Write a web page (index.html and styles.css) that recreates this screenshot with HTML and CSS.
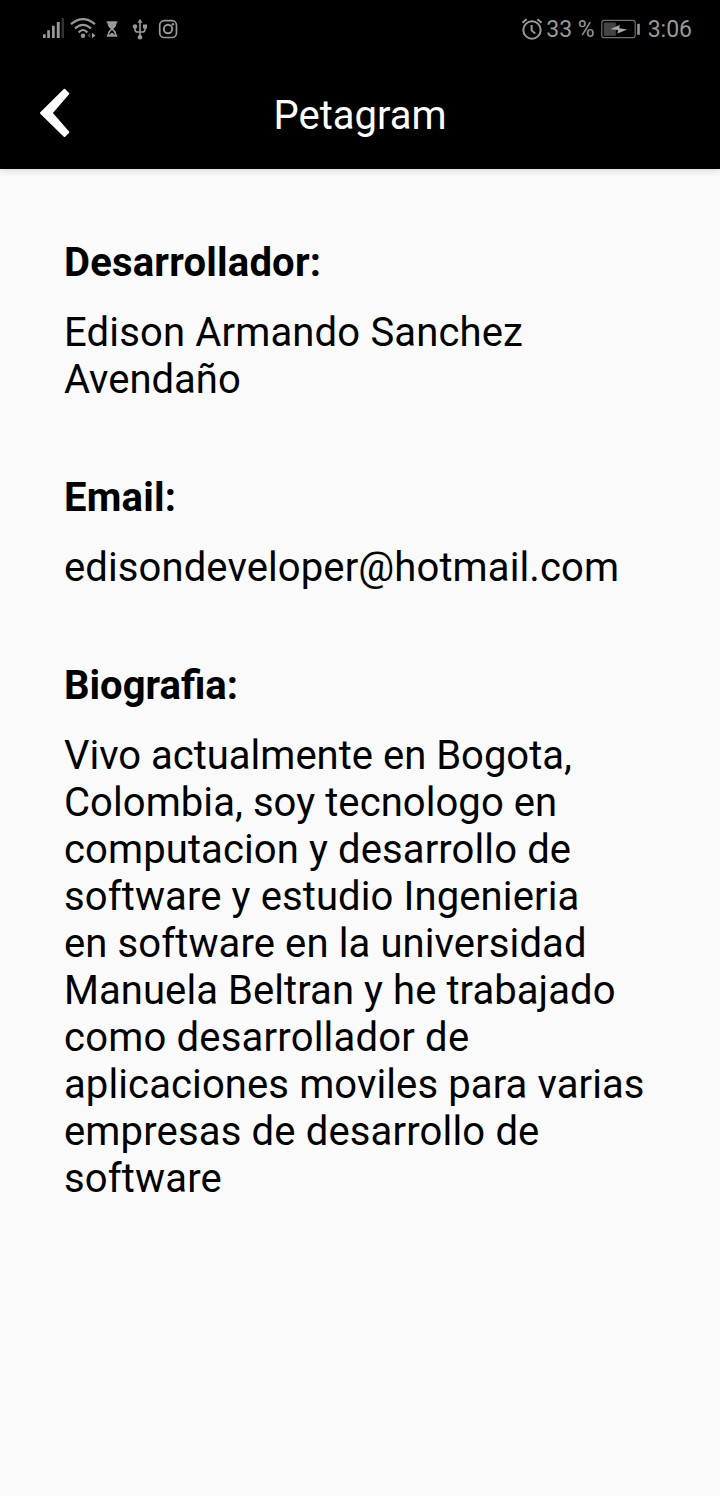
FILE: index.html
```html
<!DOCTYPE html>
<html lang="es">
<head>
<meta charset="utf-8">
<title>Petagram</title>
<link rel="stylesheet" href="styles.css">
</head>
<body>
<header class="top">
  <div class="status">
    <svg class="status-left" width="140" height="24" viewBox="42 17 140 24" fill="#999" stroke="none">
      <path d="M43 34.3h2.7V38H43zM47.2 30.3h2.7V38h-2.7zM52 25.8h2.7V38H52zM56.8 22h2.9v16h-2.9z"/>
      <path d="M61.6 18H64v20h-2.4z" fill="#333"/>
      <g fill="none" stroke="#999" stroke-width="2.2">
        <path d="M71 24.2Q83 14.2 95 24.2M75 28.5Q83 21.3 91 28.5M78.6 32.4Q83 27.6 87.4 32.4"/>
      </g>
      <circle cx="83" cy="35.7" r="2.2"/>
      <path d="M87.3 35.5l3-2.4v4.8z" fill="#444"/><path d="M92 32.8l3.5 2.7-3.5 2.7z"/>
      <path d="M106.8 21.3h10.5v1.9h-.9c0 2.7-1 4.2-3.2 5.8 2.2 1.6 3.2 3.1 3.2 5.8h.9v1.9h-10.5v-1.9h.9c0-2.7 1-4.2 3.2-5.8-2.2-1.6-3.2-3.1-3.2-5.8h-.9z"/>
      <path d="M112 30.1q3.2 2.3 3 5l-3-2.6-3 2.6q-.2-2.7 3-5z" fill="#000"/>
      <g fill="none" stroke="#999" stroke-width="1.6"><path d="M140 22v14M135 27v2.4q0 2.6 2.6 2.6h4.8q2.6 0 2.6-2.6V27"/></g>
      <path d="M140 18.7l2.5 4h-5zM143 24.6h4v4h-4z"/><circle cx="135" cy="26.5" r="2.2"/><circle cx="140" cy="37.3" r="2.3"/>
      <rect x="159.7" y="20.7" width="16.8" height="16.8" rx="4.6" fill="none" stroke="#999" stroke-width="1.7"/>
      <circle cx="168" cy="29" r="4.2" fill="none" stroke="#999" stroke-width="1.9"/>
      <circle cx="172.9" cy="24.2" r="1.2"/>
    </svg>
    <div class="status-right">
      <svg width="22" height="22" viewBox="521 18 22 22" fill="none" stroke="#999" stroke-width="2">
        <circle cx="532" cy="30" r="8.7"/>
        <path d="M531.6 25v5.4l3.6 3.2M522.4 22.8l4.2-3.6M541.6 22.8l-4.2-3.6"/>
      </svg>
      <span class="percent">33 %</span>
      <svg class="battery" width="40" height="20" viewBox="601 18.5 40 20">
        <rect x="601.8" y="19.8" width="33.4" height="17.4" rx="2.5" fill="none" stroke="#707070" stroke-width="1.2"/>
        <path d="M603.8 22h12v13.3h-12z" fill="#444"/>
        <path d="M610.2 28.7l9.6-4.2-.5 3.2 8 1.3-9.8 4 .7-3.4z" fill="#aaa"/>
        <path d="M637.2 23.3h2.6v11h-2.6z" fill="#999"/>
      </svg>
      <span class="time">3:06</span>
    </div>
  </div>
  <div class="bar">
    <svg class="back" width="32" height="50" viewBox="39 88 32 50"><path d="M41 113L64.5 89.8L68.3 93.6L51.5 113L68.3 132.2L64.5 136Z" fill="#fff" stroke="#fff" stroke-width="2" stroke-linejoin="round"/></svg>
    <h1 class="title">Petagram</h1>
  </div>
</header>
<main class="content">
  <section class="field">
    <h2 class="label spaced-wide">Desarrollador:</h2>
    <p class="value"><span class="spaced">Edison Armando Sanchez</span> Avendaño</p>
  </section>
  <section class="field">
    <h2 class="label spaced-wide">Email:</h2>
    <p class="value spaced-light">edisondeveloper@hotmail.com</p>
  </section>
  <section class="field">
    <h2 class="label">Biografia:</h2>
    <p class="value spaced-light">
      <span class="even">Vivo actualmente en Bogota,</span>
      <span class="spaced-faint">Colombia, soy tecnologo en</span>
      computacion y desarrollo de
      software y estudio Ingenieria<br>
      en software en la universidad
      <span class="spaced-faint">Manuela Beltran y he trabajado</span>
      <span class="spaced-wide">como desarrollador de</span>
      aplicaciones moviles para varias
      <span class="spaced">empresas de desarrollo de software</span>
    </p>
  </section>
</main>
</body>
</html>
```
FILE: styles.css
```css
* { box-sizing: border-box; }
body { margin: 0; min-height: 1496px; background: #fafafa; color: #000; font-family: Roboto, sans-serif; }
.top { height: 169px; background: #000; color: #fff; box-shadow: 0 1px 7px rgba(0,0,0,.16); }
.status { display: flex; justify-content: space-between; align-items: center; height: 58px; padding: 0 28px 0 42px; color: #999; font-size: 23px; }
.status svg { display: block; }
.status-right { display: flex; align-items: center; }
.percent { margin: 0 6px 0 3px; }
.time { margin-left: 7px; }
.bar { display: grid; grid-template-columns: 78px 1fr 78px; align-items: center; height: 110px; }
.back { margin-left: 39px; }
.title { margin: 0; padding-top: 4px; text-align: center; font-size: 40px; font-weight: 400; line-height: 47px; }
.content { padding: 70px 64px 0; }
.field { margin-bottom: 71px; }
.label, .value { margin: 0; font-size: 40px; line-height: 47px; }
.label { font-weight: 700; margin-bottom: 23px; }
.value { font-weight: 400; }
.even { letter-spacing: 0; }
.spaced-faint { letter-spacing: .07px; }
.spaced-light { letter-spacing: .11px; }
.spaced { letter-spacing: .16px; }
.spaced-wide { letter-spacing: .2px; }
```
